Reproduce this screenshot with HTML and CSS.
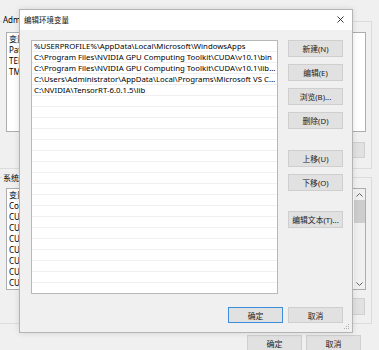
FILE: index.html
```html
<!DOCTYPE html>
<html lang="zh-CN">
<head>
<meta charset="utf-8">
<title>编辑环境变量</title>
<link rel="stylesheet" href="styles.css">
</head>
<body>
<div class="win">
  <div class="group g-user">
    <div class="glabel">Administrator 的用户变量(U)</div>
    <div class="list">
      <div class="lrow">变量</div>
      <div class="lrow">Path</div>
      <div class="lrow">TEMP</div>
      <div class="lrow">TMP</div>
    </div>
    <div class="gbtns">
      <button class="bbtn">新建(N)...</button>
      <button class="bbtn">编辑(E)...</button>
      <button class="bbtn">删除(D)</button>
    </div>
  </div>
  <div class="group g-sys">
    <div class="glabel">系统变量(S)</div>
    <div class="list">
      <div class="lbody">
        <div class="lrow">变量</div>
        <div class="lrow">ComSpec</div>
        <div class="lrow">CUDA_PATH</div>
        <div class="lrow">CUDA_PATH_V10_1</div>
        <div class="lrow">CUDNN</div>
        <div class="lrow">CUDA_BIN</div>
        <div class="lrow">CUDA_LIB</div>
        <div class="lrow">CUDA_INC</div>
        <div class="lrow">CUDA_SDK</div>
      </div>
      <div class="vscroll">
        <div class="arrow">
          <svg width="7" height="4" viewBox="0 0 7 4"><path d="M0.5 3.5 L3.5 0.5 L6.5 3.5" fill="none" stroke="#606060" stroke-width="1"/></svg>
        </div>
        <div class="thumb"></div>
        <div class="track"></div>
        <div class="arrow">
          <svg width="7" height="4" viewBox="0 0 7 4"><path d="M0.5 0.5 L3.5 3.5 L6.5 0.5" fill="none" stroke="#606060" stroke-width="1"/></svg>
        </div>
      </div>
    </div>
    <div class="gbtns sysbtns">
      <button class="bbtn">新建(W)...</button>
      <button class="bbtn">编辑(I)...</button>
      <button class="bbtn">删除(L)</button>
    </div>
  </div>
  <div class="winbtns">
    <button class="wbtn">确定</button>
    <button class="wbtn">取消</button>
  </div>
</div>

<div class="dialog">
  <div class="titlebar">
    <span class="title">编辑环境变量</span>
    <svg class="close" width="7" height="7" viewBox="0 0 7 7"><path d="M0.5 0.5 L6.5 6.5 M6.5 0.5 L0.5 6.5" fill="none" stroke="#222" stroke-width="0.9"/></svg>
  </div>
  <div class="dbody">
    <div class="dtop">
      <div class="plist">
        <div class="prow">%USERPROFILE%\AppData\Local\Microsoft\WindowsApps</div>
        <div class="prow">C:\Program Files\NVIDIA GPU Computing Toolkit\CUDA\v10.1\bin</div>
        <div class="prow">C:\Program Files\NVIDIA GPU Computing Toolkit\CUDA\v10.1\libnvvp</div>
        <div class="prow">C:\Users\Administrator\AppData\Local\Programs\Microsoft VS Code\bin</div>
        <div class="prow">C:\NVIDIA\TensorRT-6.0.1.5\lib</div>
        <div class="prow"></div><div class="prow"></div><div class="prow"></div>
        <div class="prow"></div><div class="prow"></div><div class="prow"></div>
        <div class="prow"></div><div class="prow"></div><div class="prow"></div>
        <div class="prow"></div><div class="prow"></div><div class="prow"></div>
        <div class="prow"></div><div class="prow"></div><div class="prow"></div>
        <div class="prow"></div><div class="prow"></div><div class="prow"></div>
      </div>
      <div class="pbtns">
        <button class="dbtn">新建(N)</button>
        <button class="dbtn">编辑(E)</button>
        <button class="dbtn">浏览(B)...</button>
        <button class="dbtn">删除(D)</button>
        <button class="dbtn sp">上移(U)</button>
        <button class="dbtn">下移(O)</button>
        <button class="dbtn sp2">编辑文本(T)...</button>
      </div>
    </div>
    <div class="dbottom">
      <button class="dbtn default">确定</button>
      <button class="dbtn">取消</button>
    </div>
  </div>
  <svg class="grip" width="6" height="6" viewBox="0 0 6 6">
    <rect x="4" y="0" width="1" height="1" fill="#b0b0b0"/>
    <rect x="2" y="2" width="1" height="1" fill="#b0b0b0"/>
    <rect x="4" y="2" width="1" height="1" fill="#b0b0b0"/>
    <rect x="0" y="4" width="1" height="1" fill="#b0b0b0"/>
    <rect x="2" y="4" width="1" height="1" fill="#b0b0b0"/>
    <rect x="4" y="4" width="1" height="1" fill="#b0b0b0"/>
  </svg>
</div>
</body>
</html>
```

FILE: styles.css
```css
* {
  box-sizing: border-box;
}

html,
body {
  margin: 0;
  padding: 0;
}

body {
  width: 379px;
  height: 350px;
  overflow: hidden;
  position: relative;
  background: #f0f0f0;
  font-family: "Noto Sans", "Noto Sans CJK SC", sans-serif;
  font-size: 8px;
  color: #000;
}

button {
  font-family: "Noto Sans", "Noto Sans CJK SC", sans-serif;
  padding: 0;
  margin: 0;
  color: #222;
}

/* ---------- background window ---------- */
.win {
  padding-top: 21px;
}

.group {
  margin-left: -10px;
  width: 382px;
  border: 1px solid #dcdcdc;
}

.g-user {
  height: 148px;
}

.g-sys {
  height: 147px;
  margin-top: 8px;
}

.glabel {
  width: max-content;
  height: 12px;
  line-height: 12px;
  padding: 0 1px;
  margin-left: 11px;
  background: #f0f0f0;
  font-size: 8px;
}

.g-user .glabel {
  margin-top: -8px;
  margin-bottom: 6px;
}

.g-sys .glabel {
  margin-top: -6px;
  margin-bottom: 4px;
}

.list {
  margin-left: 15px;
  width: 360px;
  background: #fff;
  border: 1px solid #adadad;
  overflow: hidden;
}

.g-user .list {
  height: 100px;
}

.g-sys .list {
  height: 102px;
  display: flex;
}

.lbody {
  flex: 1;
}

.lrow {
  height: 11px;
  line-height: 11px;
  padding-left: 2px;
  white-space: nowrap;
  font-size: 8px;
}

.vscroll {
  width: 11px;
  background: #f0f0f0;
  display: flex;
  flex-direction: column;
}

.arrow {
  height: 11px;
  display: flex;
  align-items: center;
  justify-content: center;
}

.thumb {
  height: 23px;
  background: #cdcdcd;
}

.track {
  flex: 1;
}

.gbtns {
  display: flex;
  justify-content: flex-end;
  gap: 8px;
  padding-right: 6px;
  margin-top: 10px;
}

.sysbtns {
  margin-top: 8px;
}

.bbtn {
  width: 75px;
  height: 16px;
  background: #e1e1e1;
  border: 1px solid #d0d0d0;
  font-size: 8px;
}

.sysbtns .bbtn {
  height: 17px;
}

.winbtns {
  display: flex;
  justify-content: flex-end;
  gap: 4px;
  padding-right: 18px;
  margin-top: 11px;
}

.wbtn {
  width: 55px;
  height: 22px;
  background: #e1e1e1;
  border: 1px solid #cfcfcf;
  font-size: 8px;
  padding-bottom: 5px;
}

/* ---------- dialog ---------- */
.dialog {
  position: absolute;
  left: 19px;
  top: 9px;
  width: 334px;
  height: 324px;
  background: #f0f0f0;
  border: 1px solid #b4b4b4;
  box-shadow: 0 0 6px rgba(0, 0, 0, 0.12);
  display: flex;
  flex-direction: column;
}

.titlebar {
  height: 20px;
  flex: none;
  background: #fff;
  display: flex;
  align-items: center;
  justify-content: space-between;
  padding: 0 8px 1px 4px;
}

.title {
  font-size: 7.5px;
  color: #111;
}

.dbody {
  flex: 1;
  padding: 10px 9px 9px 11px;
  display: flex;
  flex-direction: column;
}

.dtop {
  display: flex;
  gap: 10px;
  height: 254px;
}

.plist {
  width: 247px;
  height: 254px;
  background: #fff;
  border: 1px solid #b8b8b8;
  overflow: hidden;
}

.prow {
  height: 11px;
  line-height: 10px;
  border-bottom: 1px solid #f0f0f0;
  padding: 0 0 0 2px;
  white-space: nowrap;
  overflow: hidden;
  text-overflow: ellipsis;
  font-size: 7.8px;
  color: #000;
}

.pbtns {
  width: 55px;
  display: flex;
  flex-direction: column;
  gap: 7px;
}

.dbtn {
  width: 55px;
  height: 17px;
  flex: none;
  background: #e1e1e1;
  border: 1px solid #cfcfcf;
  font-size: 7.8px;
}

.sp {
  margin-top: 14px;
}

.sp2 {
  margin-top: 13px;
}

.dbottom {
  display: flex;
  justify-content: flex-end;
  gap: 5px;
  margin-top: 13px;
}

.dbottom .dbtn {
  height: 16px;
}

.dbtn.default {
  border-color: #3c8ddb;
}

.grip {
  position: absolute;
  right: 2px;
  bottom: 2px;
}
```
